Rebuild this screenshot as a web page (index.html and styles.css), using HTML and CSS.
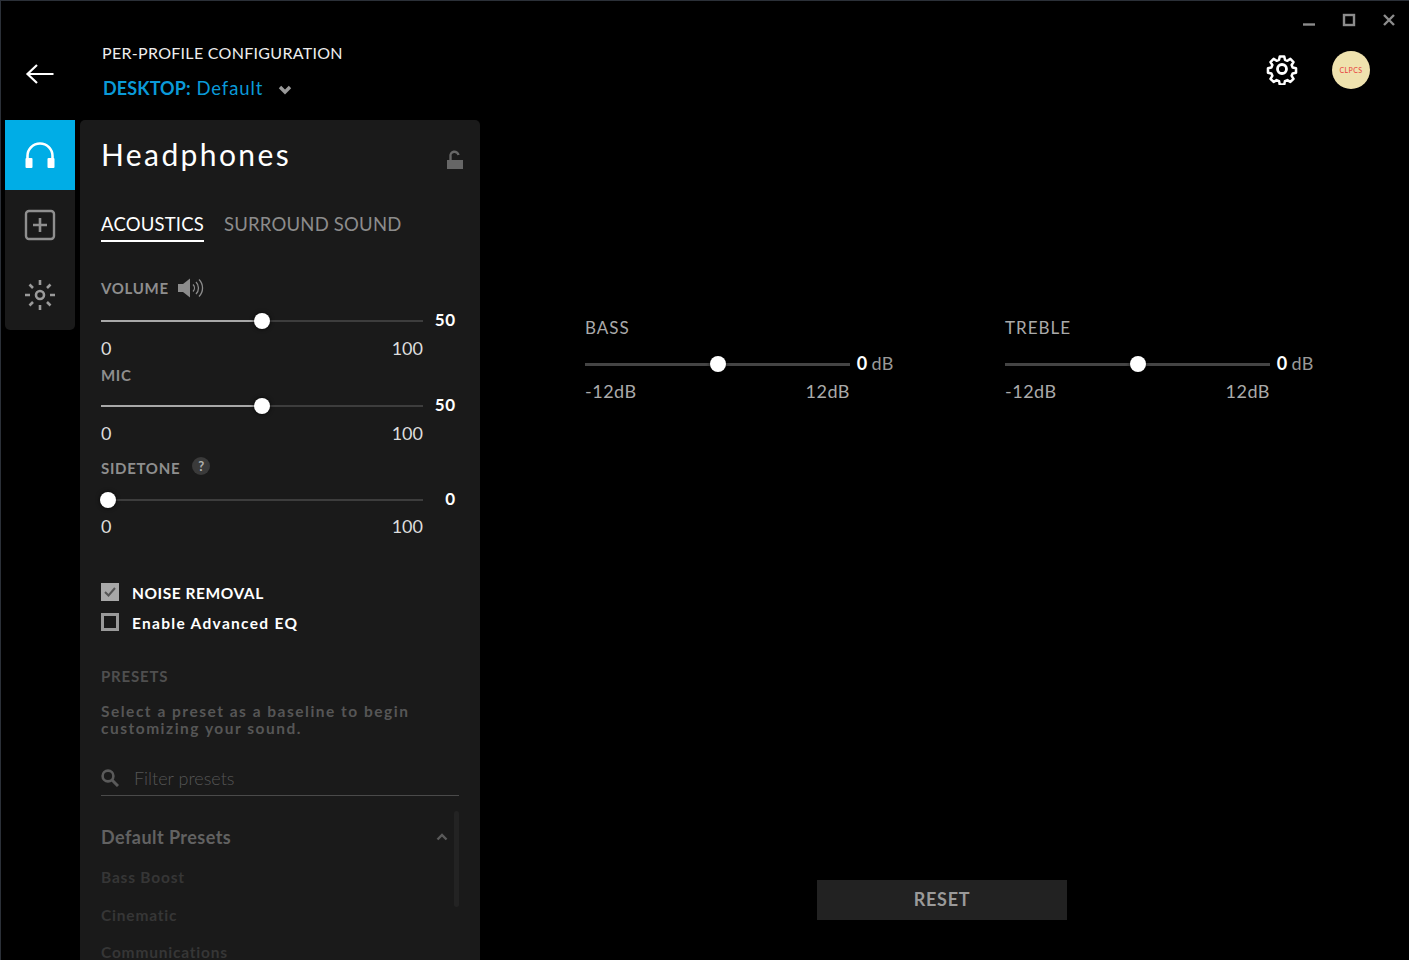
FILE: index.html
```html
<!DOCTYPE html>
<html>

<head>
    <title>Headphones</title>
    <link rel="stylesheet" href="styles.css">
</head>

<body>
    <div class="window">
        <div class="win-controls">
            <svg width="14" height="14" viewBox="0 0 14 14"><path d="M1 11.500h12" stroke="#8c8c8c" stroke-width="2.400" /></svg>
            <svg width="14" height="14" viewBox="0 0 14 14"><rect x="2" y="2" width="10" height="10" fill="none" stroke="#8c8c8c" stroke-width="2.400" /></svg>
            <svg width="14" height="14" viewBox="0 0 14 14"><path d="M2 2l10 10M12 2L2 12" stroke="#8c8c8c" stroke-width="2.400" /></svg>
        </div>

        <header class="topbar">
            <svg class="back" width="30" height="22" viewBox="0 0 30 22"><path d="M12 2L2.500 11l9.500 9M3 11h25.500" fill="none" stroke="#fff" stroke-width="2.200" /></svg>
            <div class="titles">
                <div class="config-title">PER-PROFILE CONFIGURATION</div>
                <div class="profile">
                    <b>DESKTOP:</b> Default
                    <svg width="14" height="10" viewBox="0 0 14 10"><path d="M2 2l5 5 5-5" fill="none" stroke="#9a9a9a" stroke-width="3.400" /></svg>
                </div>
            </div>
            <div class="top-right">
                <svg width="32" height="32" viewBox="0 0 32 32">
                    <path d="M13.500 2h5l.8 3.800 2.700 1.100 3.300-2.100 3.500 3.500-2.100 3.300 1.100 2.700 3.800.8v5l-3.800.8-1.100 2.700 2.100 3.300-3.500 3.500-3.300-2.100-2.700 1.100-.8 3.800h-5l-.8-3.800-2.700-1.100-3.300 2.100-3.500-3.500 2.100-3.300-1.100-2.700-3.800-.8v-5l3.800-.8 1.100-2.700-2.100-3.300 3.500-3.500 3.300 2.100 2.700-1.100z" transform="translate(1.600 1.600) scale(.9)" fill="none" stroke="#fff" stroke-width="2.800" stroke-linejoin="round" />
                    <circle cx="16" cy="16" r="4.500" fill="none" stroke="#fff" stroke-width="2.800" />
                </svg>
                <div class="avatar">CLPCS</div>
            </div>
        </header>

        <div class="content">
            <nav class="rail">
                <div class="rail-item active">
                    <svg width="32" height="28" viewBox="0 0 32 28"><path d="M3.500 20V15a12.500 12.500 0 0 1 25 0v5" fill="none" stroke="#fff" stroke-width="2.600" /><rect x="1.500" y="17" width="7" height="10" rx="1" fill="#fff" /><rect x="23.500" y="17" width="7" height="10" rx="1" fill="#fff" /></svg>
                </div>
                <div class="rail-item">
                    <svg width="32" height="32" viewBox="0 0 32 32"><rect x="2" y="2" width="28" height="28" rx="3" fill="none" stroke="#8f8f8f" stroke-width="2.400" /><path d="M16 9v14M9 16h14" stroke="#8f8f8f" stroke-width="2.600" /></svg>
                </div>
                <div class="rail-item">
                    <svg width="32" height="32" viewBox="0 0 32 32"><circle cx="16" cy="16" r="4" fill="none" stroke="#9a9a9a" stroke-width="2.600" /><path d="M16 1v5M16 26v5M1 16h5M26 16h5M5.500 5.500l3.500 3.500M23 23l3.500 3.500M26.500 5.500L23 9M9 23l-3.500 3.500" stroke="#9a9a9a" stroke-width="2.600" /></svg>
                </div>
            </nav>

            <section class="panel">
                <div class="panel-head">
                    <h1>Headphones</h1>
                    <svg width="18" height="20" viewBox="0 0 18 20"><path d="M4.500 10V6.500a4 4 0 0 1 8-1.500" fill="none" stroke="#666" stroke-width="2.400" /><rect x="1" y="10" width="16" height="9" fill="#666" /></svg>
                </div>

                <div class="tabs">
                    <span class="tab selected">ACOUSTICS</span>
                    <span class="tab">SURROUND SOUND</span>
                </div>

                <div class="group volume">
                    <div class="label">VOLUME
                        <svg width="26" height="22" viewBox="0 0 26 22"><path d="M0 7h5L12 1.500v19L5 15H0z" fill="#8c8c8c" /><path d="M15 7.500a5 5 0 0 1 0 7M18 5a8.500 8.500 0 0 1 0 12M21 2.500a12 12 0 0 1 0 17" fill="none" stroke="#8c8c8c" stroke-width="1.300" /></svg>
                    </div>
                    <div class="slider-row">
                        <div class="slider"><div class="fill" style="width:50%"></div><div class="thumb" style="left:50%"></div></div>
                        <span class="value">50</span>
                    </div>
                    <div class="range"><span>0</span><span>100</span></div>
                </div>

                <div class="group mic">
                    <div class="label">MIC</div>
                    <div class="slider-row">
                        <div class="slider"><div class="fill" style="width:50%"></div><div class="thumb" style="left:50%"></div></div>
                        <span class="value">50</span>
                    </div>
                    <div class="range"><span>0</span><span>100</span></div>
                </div>

                <div class="group sidetone">
                    <div class="label">SIDETONE <span class="help">?</span></div>
                    <div class="slider-row">
                        <div class="slider"><div class="thumb" style="left:2.300%"></div></div>
                        <span class="value">0</span>
                    </div>
                    <div class="range"><span>0</span><span>100</span></div>
                </div>

                <div class="checks">
                    <div class="check-row noise">
                        <span class="box on"><svg width="14" height="12" viewBox="0 0 14 12"><path d="M2 6l3.500 3.500L12 2" fill="none" stroke="#555" stroke-width="2" /></svg></span>
                        NOISE REMOVAL
                    </div>
                    <div class="check-row">
                        <span class="box"></span>
                        Enable Advanced EQ
                    </div>
                </div>

                <div class="presets">
                    <div class="presets-title">PRESETS</div>
                    <p class="presets-text">Select a preset as a baseline to begin customizing your sound.</p>
                    <div class="filter">
                        <svg width="18" height="18" viewBox="0 0 18 18"><circle cx="7" cy="7" r="5.400" fill="none" stroke="#5a5a5a" stroke-width="2.600" /><path d="M11 11l6 6" stroke="#5a5a5a" stroke-width="3" /></svg>
                        <span>Filter presets</span>
                    </div>
                    <div class="preset-list">
                        <div class="scrollbar"></div>
                        <div class="list-head">
                            Default Presets
                            <svg width="12" height="8" viewBox="0 0 12 8"><path d="M1.500 6.500L6 2l4.500 4.500" fill="none" stroke="#5a5a5a" stroke-width="2.400" /></svg>
                        </div>
                        <div class="preset">Bass Boost</div>
                        <div class="preset">Cinematic</div>
                        <div class="preset">Communications</div>
                    </div>
                </div>
            </section>

            <main class="eq-area">
                <div class="eq-row">
                    <div class="eq">
                        <div class="eq-label">BASS</div>
                        <div class="eq-slider">
                            <div class="slider"><div class="thumb" style="left:50%"></div></div>
                            <span class="eq-value"><b>0</b> dB</span>
                        </div>
                        <div class="eq-range"><span>-12dB</span><span>12dB</span></div>
                    </div>
                    <div class="eq">
                        <div class="eq-label">TREBLE</div>
                        <div class="eq-slider">
                            <div class="slider"><div class="thumb" style="left:50%"></div></div>
                            <span class="eq-value"><b>0</b> dB</span>
                        </div>
                        <div class="eq-range"><span>-12dB</span><span>12dB</span></div>
                    </div>
                </div>
                <button class="reset">RESET</button>
            </main>
        </div>
    </div>
</body>

</html>
```

FILE: styles.css
```css
* {
    box-sizing: border-box;
}

html,
body {
    margin: 0;
    height: 100%;
    overflow: hidden;
    background-color: #000;
}

body {
    font-family: 'Lato', sans-serif;
    color: #fff;
}

.window {
    position: relative;
    width: 1409px;
    height: 960px;
    border-top: 1px solid #2b3038;
    border-left: 1px solid #2b3038;
    display: flex;
    flex-direction: column;
    overflow: hidden;
}

.win-controls {
    position: absolute;
    top: 12px;
    right: 13px;
    display: flex;
    gap: 26px;
}

.topbar {
    height: 119px;
    flex: none;
    display: flex;
    padding-left: 24px;
}

.back {
    margin-top: 62px;
}

.titles {
    margin-left: 47px;
    padding-top: 42px;
}

.config-title {
    font-size: 16px;
    line-height: 20px;
    letter-spacing: 0.3px;
    color: #eee;
}

.profile {
    margin: 14px 0 0 1px;
    font-size: 18.500px;
    line-height: 22px;
    letter-spacing: 0.9px;
    color: #0a9ad8;
}

.profile b {
    font-size: 18px;
    font-weight: 700;
    letter-spacing: 0.1px;
}

.profile svg {
    margin-left: 9px;
}

.top-right {
    margin-left: auto;
    padding: 50px 39px 0 0;
    display: flex;
    gap: 34px;
    align-items: flex-start;
}

.top-right svg {
    margin-top: 2px;
}

.avatar {
    width: 38px;
    height: 38px;
    border-radius: 50%;
    background-color: #efe2ae;
    color: #e8403a;
    font-size: 7px;
    line-height: 38px;
    letter-spacing: 0.4px;
    text-align: center;
}

.content {
    flex: 1;
    display: flex;
    min-height: 0;
}

.rail {
    width: 70px;
    height: 210px;
    margin-left: 4px;
    background-color: #1a1a1a;
    border-radius: 0 0 5px 5px;
    overflow: hidden;
}

.rail-item {
    height: 70px;
    display: flex;
    align-items: center;
    justify-content: center;
}

.rail-item.active {
    background-color: #00ade6;
}

.panel {
    width: 400px;
    margin-left: 5px;
    padding: 0 21px;
    background-color: #1a1a1a;
    border-radius: 5px 5px 0 0;
    overflow: hidden;
}

.panel-head {
    height: 76px;
    margin-right: -5px;
    display: flex;
    justify-content: space-between;
    padding: 14px 0 0 0;
}

.panel-head h1 {
    margin: 0;
    font-size: 30px;
    font-weight: 400;
    line-height: 40px;
    letter-spacing: 2.400px;
}

.panel-head svg {
    margin-top: 16px;
}

.tabs {
    display: flex;
    gap: 20px;
    font-size: 18.500px;
    letter-spacing: 0.2px;
    color: #8c8c8c;
    margin-top: 6px;
}

.tab {
    height: 40px;
    line-height: 44px;
    white-space: nowrap;
}

.tab.selected {
    color: #fff;
    border-bottom: 2px solid #fff;
}

.group {
    width: 355px;
}

.volume {
    margin-top: 33px;
}

.mic {
    margin-top: 2px;
}

.sidetone {
    margin-top: 10px;
}

.label {
    height: 26px;
    display: flex;
    align-items: center;
    gap: 9px;
    font-size: 15px;
    font-weight: 700;
    letter-spacing: 0.7px;
    color: #8e8e8e;
}

.help {
    width: 18px;
    height: 18px;
    margin: -4px 0 0 3px;
    border-radius: 50%;
    background-color: #3a3a3a;
    color: #b0b0b0;
    font-size: 13px;
    line-height: 18px;
    letter-spacing: 0;
    text-align: center;
}

.slider-row {
    display: flex;
    align-items: center;
    justify-content: space-between;
    height: 30px;
    margin-top: 3px;
}

.mic .slider-row {
    margin-top: 1px;
}

.sidetone .slider-row {
    margin-top: 2px;
}

.slider {
    position: relative;
    width: 322px;
    height: 2px;
    background-color: #3d3d3d;
    margin-top: 4px;
}

.fill {
    height: 100%;
    background-color: #a8a8a8;
}

.thumb {
    position: absolute;
    top: -7px;
    width: 16px;
    height: 16px;
    margin-left: -8px;
    border-radius: 50%;
    background-color: #fff;
    box-shadow: 0 0 4px rgba(0, 0, 0, 0.8);
}

.value {
    font-size: 17px;
    font-weight: 700;
    letter-spacing: 0.8px;
}

.range {
    width: 322px;
    display: flex;
    justify-content: space-between;
    font-size: 18px;
    line-height: 24px;
    margin-top: 2px;
    color: #ddd;
}

.sidetone .range {
    margin-top: 1px;
}

.checks {
    margin-top: 40px;
}

.check-row {
    display: flex;
    align-items: center;
    gap: 13px;
    height: 30px;
    font-size: 15.500px;
    font-weight: 700;
    letter-spacing: 1.300px;
}

.check-row.noise {
    letter-spacing: 0.550px;
}

.box {
    width: 18px;
    height: 18px;
    margin-top: -2px;
    border: 3px solid #9a9a9a;
    display: flex;
    align-items: center;
    justify-content: center;
}

.box.on {
    background-color: #a8a8a8;
    border: 0;
}

.presets {
    margin-top: 28px;
}

.presets-title {
    font-size: 15px;
    font-weight: 700;
    line-height: 20px;
    letter-spacing: 0.8px;
    color: #4f4f4f;
}

.presets-text {
    margin: 17px 0 0;
    width: 340px;
    font-size: 15.500px;
    font-weight: 700;
    line-height: 17px;
    letter-spacing: 1.500px;
    color: #565656;
}

.filter {
    height: 34px;
    margin-top: 25px;
    padding-bottom: 2px;
    width: 358px;
    display: flex;
    align-items: center;
    gap: 15px;
    border-bottom: 1px solid #4a4a4a;
    font-size: 18px;
    font-weight: 300;
    color: #555;
}

.preset-list {
    position: relative;
    width: 358px;
    padding-top: 28px;
}

.scrollbar {
    position: absolute;
    top: 15px;
    right: 0;
    width: 5px;
    height: 96px;
    border-radius: 3px;
    background-color: #232323;
}

.list-head {
    display: flex;
    justify-content: space-between;
    align-items: center;
    padding-right: 11px;
    height: 26px;
    font-size: 18px;
    font-weight: 700;
    letter-spacing: 0.45px;
    color: #626262;
}

.preset {
    font-size: 15.500px;
    font-weight: 700;
    line-height: 38px;
    letter-spacing: 0.8px;
    color: #363636;
}

.list-head+.preset {
    margin-top: 8px;
}

.preset:last-child {
    margin-top: -1px;
}

.eq-area {
    flex: 1;
    display: flex;
    flex-direction: column;
    padding: 196px 0 40px 105px;
}

.eq-row {
    display: flex;
    gap: 111px;
}

.eq {
    width: 309px;
}

.eq-label {
    font-size: 17px;
    line-height: 24px;
    letter-spacing: 1px;
    color: #aaa;
}

.eq-slider {
    display: flex;
    align-items: center;
    justify-content: space-between;
    height: 30px;
    margin-top: 8px;
}

.eq-slider .slider {
    width: 265px;
    height: 3px;
    margin-top: 2px;
    background-color: #444;
}

.eq-slider .thumb {
    top: -7px;
}

.eq-value {
    font-size: 18px;
    letter-spacing: 0.5px;
    word-spacing: -1.500px;
    color: #999;
}

.eq-value b {
    color: #fff;
}

.eq-range {
    width: 265px;
    margin-top: 1px;
    display: flex;
    justify-content: space-between;
    font-size: 18px;
    line-height: 24px;
    letter-spacing: 0.5px;
    color: #aaa;
}

.reset {
    margin: auto 0 0 232px;
    padding: 0 0 2px;
    width: 250px;
    height: 40px;
    border: 0;
    background-color: #222;
    color: #9a9a9a;
    font-family: inherit;
    font-size: 18px;
    font-weight: 700;
    letter-spacing: 0.7px;
}
```
